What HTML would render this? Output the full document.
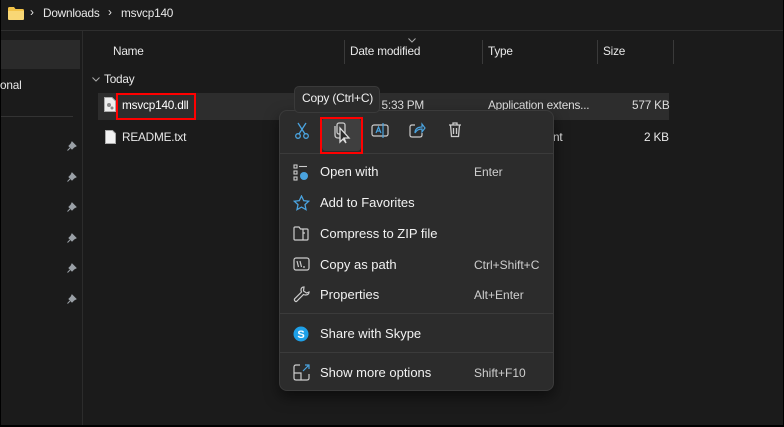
<!DOCTYPE html>
<html><head><style>
*{margin:0;padding:0;box-sizing:border-box}
body{width:784px;height:427px;background:#000;font-family:"Segoe UI","Liberation Sans",sans-serif;color:#fff;overflow:hidden;position:relative}
.win{position:absolute;left:1px;top:0;width:782px;height:425px;background:#1b1b1b}
.a{position:absolute;white-space:nowrap}
.t{font-size:11.8px;color:#e8e8e8;letter-spacing:-0.2px}
.g{color:#cfcfcf}
.vs{position:absolute;width:1px;background:#3a3a3a}
.pin{position:absolute;left:66px;width:10px;height:10px}
.mi{position:absolute;left:319px;font-size:13px;color:#f2f2f2}
.sc{position:absolute;left:473px;font-size:12px;color:#cfcfcf}
.ic{position:absolute;left:292px}
</style></head><body>
<div class="win">
<svg class="a" style="left:7px;top:7px" width="16" height="13" viewBox="0 0 16 13"><path d="M0 1.5Q0 0 1.5 0H6L7.5 2H14.5Q16 2 16 3.5V11.5Q16 13 14.5 13H1.5Q0 13 0 11.5Z" fill="#f3c348"/><path d="M0 4H16V11.5Q16 13 14.5 13H1.5Q0 13 0 11.5Z" fill="#f8d775"/></svg>
<div class="a t" style="left:29px;top:5px">›</div>
<div class="a t" style="left:42px;top:6px">Downloads</div>
<div class="a t" style="left:107px;top:5px">›</div>
<div class="a t" style="left:120px;top:6px">msvcp140</div>
<div class="a" style="left:0;top:30px;width:782px;height:1px;background:#2e2e2e"></div>
<div class="a" style="left:0;top:40px;width:79px;height:29px;background:#2a2a2a"></div>
<div class="a t" style="left:-1px;top:78px">onal</div>
<div class="a" style="left:0;top:116px;width:72px;height:1px;background:#333"></div>
<div class="vs" style="left:81px;top:31px;height:394px;background:#2c2c2c"></div>
<svg class="pin" style="top:141px" viewBox="0 0 10 10"><path d="M5 1L9 5L7 6L5 8L2 5L4 3Z M3 7L0.5 9.5" fill="#9aa0a6" stroke="#9aa0a6"/></svg>
<svg class="pin" style="top:172px" viewBox="0 0 10 10"><path d="M5 1L9 5L7 6L5 8L2 5L4 3Z M3 7L0.5 9.5" fill="#9aa0a6" stroke="#9aa0a6"/></svg>
<svg class="pin" style="top:202px" viewBox="0 0 10 10"><path d="M5 1L9 5L7 6L5 8L2 5L4 3Z M3 7L0.5 9.5" fill="#9aa0a6" stroke="#9aa0a6"/></svg>
<svg class="pin" style="top:233px" viewBox="0 0 10 10"><path d="M5 1L9 5L7 6L5 8L2 5L4 3Z M3 7L0.5 9.5" fill="#9aa0a6" stroke="#9aa0a6"/></svg>
<svg class="pin" style="top:263px" viewBox="0 0 10 10"><path d="M5 1L9 5L7 6L5 8L2 5L4 3Z M3 7L0.5 9.5" fill="#9aa0a6" stroke="#9aa0a6"/></svg>
<svg class="pin" style="top:294px" viewBox="0 0 10 10"><path d="M5 1L9 5L7 6L5 8L2 5L4 3Z M3 7L0.5 9.5" fill="#9aa0a6" stroke="#9aa0a6"/></svg>
<div class="a t" style="left:112px;top:44px">Name</div>
<div class="vs" style="left:343px;top:40px;height:24px"></div>
<div class="a t" style="left:349px;top:44px">Date modified</div>
<svg class="a" style="left:407px;top:38px" width="8" height="5" viewBox="0 0 8 5"><path d="M0.5 0.5L4 4L7.5 0.5" fill="none" stroke="#aaa"/></svg>
<div class="vs" style="left:481px;top:40px;height:24px"></div>
<div class="a t" style="left:487px;top:44px">Type</div>
<div class="vs" style="left:596px;top:40px;height:24px"></div>
<div class="a t" style="left:602px;top:44px">Size</div>
<div class="vs" style="left:672px;top:40px;height:24px"></div>
<svg class="a" style="left:91px;top:77px" width="8" height="5" viewBox="0 0 8 5"><path d="M0.5 0.5L4 4L7.5 0.5" fill="none" stroke="#aaa"/></svg>
<div class="a t" style="left:103px;top:72px">Today</div>
<div class="a" style="left:97px;top:93px;width:571px;height:27px;background:#2d2d2d"></div>
<svg class="a" style="left:103px;top:97px" width="12" height="15" viewBox="0 0 12 15"><path d="M0.5 0.5H8L11.5 4V14.5H0.5Z" fill="#eee" stroke="#aaa"/><circle cx="5" cy="8" r="2" fill="#888"/><circle cx="8" cy="11" r="1.5" fill="#888"/></svg>
<div class="a t" style="left:121px;top:98px;color:#fff">msvcp140.dll</div>
<div class="a" style="left:115px;top:93px;width:80px;height:27px;border:2.5px solid #f00"></div>
<div class="a t" style="left:352px;top:98px;color:#ddd">2023 5:33 PM</div>
<div class="a t" style="left:487px;top:98px;color:#ddd">Application extens...</div>
<div class="a t" style="left:631px;top:98px;color:#ddd">577 KB</div>
<svg class="a" style="left:104px;top:130px" width="11" height="14" viewBox="0 0 11 14"><path d="M0.5 0.5H7.5L10.5 3.5V13.5H0.5Z" fill="#f2f2f2" stroke="#aaa"/></svg>
<div class="a t" style="left:121px;top:130px">README.txt</div>
<div class="a t" style="left:552px;top:130px">nt</div>
<div class="a t" style="left:643px;top:130px">2 KB</div>
<div class="a" style="left:278px;top:110px;width:275px;height:281px;background:#2c2c2c;border:1px solid #3b3b3b;border-radius:8px;box-shadow:0 6px 14px rgba(0,0,0,.5)"></div>
<div class="a" style="left:279px;top:153px;width:273px;height:1px;background:#3b3b3b"></div>
<div class="a" style="left:279px;top:313px;width:273px;height:1px;background:#3b3b3b"></div>
<div class="a" style="left:279px;top:352px;width:273px;height:1px;background:#3b3b3b"></div>
<svg class="a" style="left:293px;top:122px" width="16" height="17" viewBox="0 0 16 17" fill="none" stroke="#4aa3df" stroke-width="1.3"><path d="M4 1L11 12M12 1L5 12"/><circle cx="4" cy="14" r="2.3"/><circle cx="12" cy="14" r="2.3"/></svg>
<div class="a" style="left:321px;top:118px;width:39px;height:33px;background:#3f3f3f;border-radius:4px"></div>
<svg class="a" style="left:331px;top:122px" width="22" height="22" viewBox="0 0 22 22" fill="none" stroke="#ccc" stroke-width="1.3"><rect x="5" y="1" width="8" height="11" rx="2"/><path d="M3 4V13Q3 16 6 16H11"/><path d="M8 6V20L11 17L14 21L12 16H17Z" fill="#2b2b2b" stroke="#ddd"/></svg>
<div class="a" style="left:319px;top:117px;width:43px;height:37px;border:2.5px solid #f00"></div>
<svg class="a" style="left:370px;top:122px" width="18" height="17" viewBox="0 0 18 17" fill="none" stroke="#ccc" stroke-width="1.2"><rect x="1" y="3" width="16" height="11" rx="2"/><path d="M5 11L7.5 5L10 11M6 9H9" stroke="#4aa3df"/><path d="M12 1V16" stroke="#4aa3df"/></svg>
<svg class="a" style="left:408px;top:122px" width="17" height="16" viewBox="0 0 17 16" fill="none" stroke="#ccc" stroke-width="1.2"><path d="M6 3H3Q1 3 1 5V13Q1 15 3 15H11Q13 15 13 13V11"/><path d="M6 11Q6 5 13 5V2L16 6L13 10V7Q8 7 6 11Z" stroke="#4aa3df"/></svg>
<svg class="a" style="left:447px;top:122px" width="14" height="16" viewBox="0 0 14 16" fill="none" stroke="#ccc" stroke-width="1.3"><path d="M1 3H13M5 3V1H9V3M2.5 3L3.5 14.5H10.5L11.5 3M5.5 6V12M8.5 6V12"/></svg>
<div class="a" style="left:293px;top:86px;width:86px;height:27px;background:#2b2b2b;border:1px solid #3a3a3a;border-radius:5px"></div>
<div class="a" style="left:301px;top:91px;font-size:12px;color:#f0f0f0;letter-spacing:-0.2px">Copy (Ctrl+C)</div>
<svg class="ic" style="top:164px" width="16" height="17" viewBox="0 0 16 17" fill="none" stroke="#ccc" stroke-width="1.1"><rect x="1" y="1" width="3" height="3"/><rect x="1" y="7" width="3" height="3"/><rect x="1" y="13" width="3" height="3"/><path d="M6 2.5H14"/><circle cx="11" cy="12" r="4" fill="#4aa3df" stroke="none"/></svg>
<div class="mi" style="top:164px">Open with</div><div class="sc" style="top:165px">Enter</div>
<svg class="ic" style="top:195px" width="17" height="16" viewBox="0 0 17 16" fill="none" stroke="#4aa3df" stroke-width="1.3"><path d="M8.5 1L10.7 5.6L15.7 6.2L12 9.6L13 14.6L8.5 12.1L4 14.6L5 9.6L1.3 6.2L6.3 5.6Z"/></svg>
<div class="mi" style="top:195px">Add to Favorites</div>
<svg class="ic" style="top:226px" width="16" height="15" viewBox="0 0 16 15" fill="none" stroke="#ccc" stroke-width="1.2"><path d="M1 2Q1 1 2 1H6L7.5 3H14Q15 3 15 4V13Q15 14 14 14H2Q1 14 1 13Z M10 3V14 M10 7H12"/></svg>
<div class="mi" style="top:226px">Compress to ZIP file</div>
<svg class="ic" style="top:257px" width="17" height="14" viewBox="0 0 17 14" fill="none" stroke="#ccc" stroke-width="1.2"><rect x="1" y="1" width="15" height="12" rx="2"/><path d="M4 4L5.5 10M7 4L8.5 10M10 10H12"/></svg>
<div class="mi" style="top:257px">Copy as path</div><div class="sc" style="top:258px">Ctrl+Shift+C</div>
<svg class="ic" style="top:286px" width="17" height="17" viewBox="0 0 17 17" fill="none" stroke="#ccc" stroke-width="1.2"><path d="M11 1Q8 1 8 4Q8 5 8.5 6L1.5 13Q1 14.5 2.5 15.5L3.5 15.5L10.5 8.5Q11.5 9 12.5 9Q16 9 16 6L13.5 7L10.5 5Z"/></svg>
<div class="mi" style="top:287px">Properties</div><div class="sc" style="top:288px">Alt+Enter</div>
<svg class="ic" style="top:326px" width="16" height="16" viewBox="0 0 16 16"><circle cx="8" cy="8" r="7.5" fill="#1ea0e8"/><text x="8" y="12" font-size="11" font-weight="bold" fill="#fff" text-anchor="middle" font-family="Liberation Sans">S</text></svg>
<div class="mi" style="top:326px">Share with Skype</div>
<svg class="ic" style="top:364px" width="17" height="17" viewBox="0 0 17 17" fill="none" stroke="#ccc" stroke-width="1.2"><path d="M7 1H3Q1 1 1 3V14Q1 16 3 16H14Q16 16 16 14V10M1 9H8V16"/><path d="M10 7L16 1M12 1H16V5" stroke="#4aa3df"/></svg>
<div class="mi" style="top:365px">Show more options</div><div class="sc" style="top:366px">Shift+F10</div>
</div>
</body></html>
